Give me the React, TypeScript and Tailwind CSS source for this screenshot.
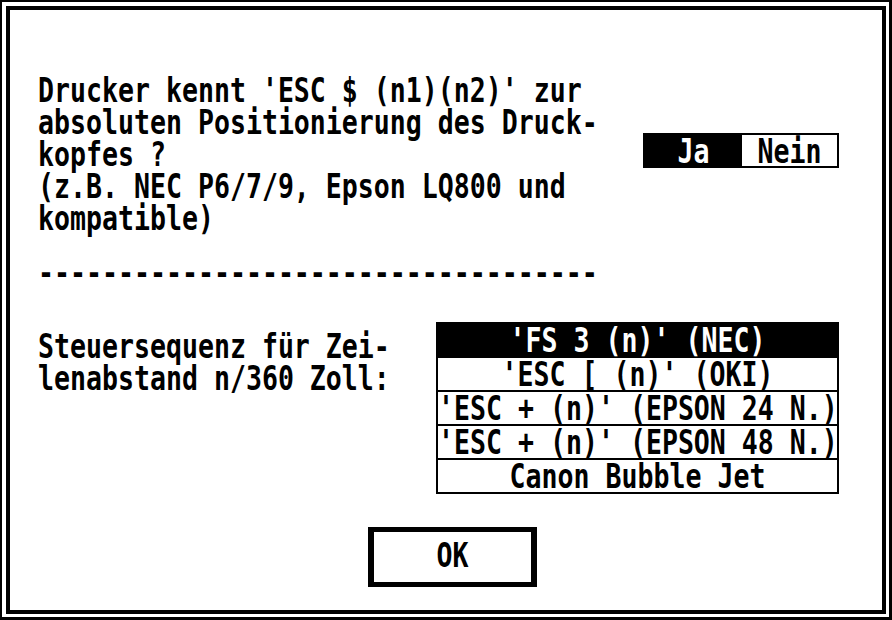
import React from "react";

type LineProps = {
  children?: React.ReactNode;
  row?: boolean;
  className?: string;
};

// one text row of the 16x32 system font grid
function Line({ children, row = false, className = "" }: LineProps) {
  return (
    <div className={`h-8 leading-[32px] whitespace-pre ${className}`}>
      <span
        className={`inline-block leading-[22px] scale-y-[1.24] ${
          row ? "origin-[50%_8px]" : "origin-top"
        }`}
      >
        {children}
      </span>
    </div>
  );
}

const printers = [
  "'FS 3 (n)' (NEC)",
  "'ESC [ (n)' (OKI)",
  "'ESC + (n)' (EPSON 24 N.)",
  "'ESC + (n)' (EPSON 48 N.)",
  "Canon Bubble Jet",
];

export default function App() {
  return (
    <div className="h-[620px] w-[892px] bg-white border-t-2 border-l-2 border-r-[3px] border-b-[3px] border-black pt-1 pl-1 pr-[3px] pb-[3px] font-['DejaVu_Sans_Mono',monospace] font-bold text-[26.575px] text-black">
      <div className="h-full w-full border-4 border-black pl-[28px] pt-[62px]">
        {/* Question + Ja/Nein */}
        <div className="flex">
          <div className="w-[605px]">
            <Line>Drucker kennt 'ESC $ (n1)(n2)' zur</Line>
            <Line>absoluten Positionierung des Druck-</Line>
            <Line>kopfes ?</Line>
            <Line>(z.B. NEC P6/7/9, Epson LQ800 und</Line>
            <Line>kompatible)</Line>
            <div className="h-[22px]" />
            <Line>-----------------------------------</Line>
          </div>
          <div className="mt-[61px] flex h-[35px] w-[196px] border-2 border-black">
            <div className="w-[97px] bg-black text-center text-white">
              <Line row className="leading-[31px]">Ja</Line>
            </div>
            <div className="flex-1 text-center">
              <Line row className="leading-[31px]">Nein</Line>
            </div>
          </div>
        </div>

        <div className="h-[36px]" />

        {/* Zeilenabstand */}
        <div className="flex">
          <div className="w-[398px] pt-[6px]">
            <Line>Steuersequenz für Zei-</Line>
            <Line>lenabstand n/360 Zoll:</Line>
          </div>
          <div className="w-[403px] border-2 border-black">
            {printers.map((p, i) => (
              <div
                key={p}
                className={`text-center ${i === 0 ? "bg-black text-white" : "border-t-2 border-black"}`}
              >
                <Line row>{p}</Line>
              </div>
            ))}
          </div>
        </div>

        <div className="ml-[330px] mt-[33px] h-[60px] w-[169px] border-x-[6px] border-y-[5px] border-black pt-[5px] text-center">
          <Line>OK</Line>
        </div>
      </div>
    </div>
  );
}
